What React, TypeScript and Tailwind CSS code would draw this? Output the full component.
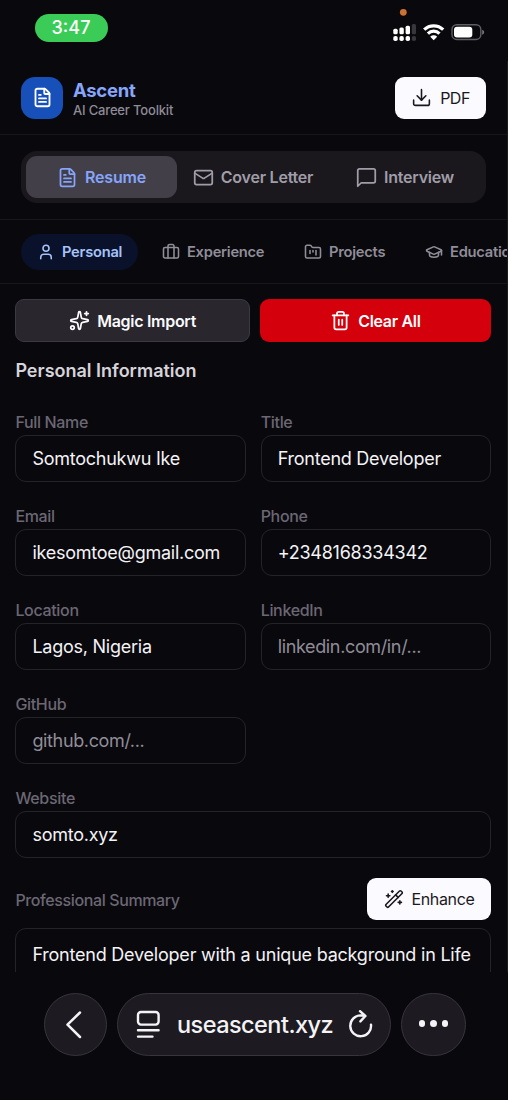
import {
  Briefcase,
  Download,
  FileText,
  FolderKanban,
  GraduationCap,
  Mail,
  Sparkles,
  Trash2,
  User,
  WandSparkles,
} from 'lucide-react';

function ChatIcon({ size = 24, className }: { size?: number; strokeWidth?: number; className?: string }) {
  return (
    <svg width={size} height={size} viewBox="0 0 24 24" fill="none" stroke="currentColor" strokeWidth="2" strokeLinecap="round" strokeLinejoin="round" className={className}>
      <path d="M22 16a2 2 0 0 1-2 2H6l-4 4V4a2 2 0 0 1 2-2h16a2 2 0 0 1 2 2z" />
    </svg>
  );
}

const mainTabs = [
  { label: 'Resume', icon: FileText, active: true, className: 'w-[151px]' },
  { label: 'Cover Letter', icon: Mail, active: false, className: 'w-[152px]' },
  { label: 'Interview', icon: ChatIcon, active: false, className: 'w-[152px]' },
];

const sections = [
  { label: 'Personal', icon: User, active: true },
  { label: 'Experience', icon: Briefcase, active: false },
  { label: 'Projects', icon: FolderKanban, active: false },
  { label: 'Education', icon: GraduationCap, active: false },
];

const fields = [
  { label: 'Full Name', value: 'Somtochukwu Ike' },
  { label: 'Title', value: 'Frontend Developer' },
  { label: 'Email', value: 'ikesomtoe@gmail.com' },
  { label: 'Phone', value: '+2348168334342' },
  { label: 'Location', value: 'Lagos, Nigeria' },
  { label: 'LinkedIn', placeholder: 'linkedin.com/in/...' },
  { label: 'GitHub', placeholder: 'github.com/...' },
  { label: 'Website', value: 'somto.xyz', wide: true },
];

function Field({ label, value, placeholder, wide }: { label: string; value?: string; placeholder?: string; wide?: boolean }) {
  return (
    <div className={wide ? 'col-span-2' : ''}>
      <div className="h-[25px] text-[16px] leading-[24px] font-medium tracking-[-0.33px] text-[#6b6773]">{label}</div>
      <div className="h-[47px] rounded-[11px] border-[1.5px] border-[#242328] px-4 text-[18px] leading-[46px] tracking-[-0.25px] whitespace-nowrap">
        {value ? (
          <span className="text-[#f4f3f6]">{value}</span>
        ) : (
          <span className="tracking-[-0.36px] text-[#908d98]">{placeholder}</span>
        )}
      </div>
    </div>
  );
}

function StatusBar() {
  return (
    <div className="relative h-[61px] shrink-0">
      <div className="absolute left-[34.5px] top-[14px] h-[28px] w-[73px] rounded-full bg-[#3bcc58] text-center text-[18px] leading-[28px] font-medium text-white">
        3:47
      </div>
      <svg className="absolute left-[388px] top-0" width="104" height="48" viewBox="0 0 104 48">
        <circle cx="15.3" cy="12.3" r="3.4" fill="#cd7331" />
        {/* Dual SIM signal */}
        <g fill="#fff">
          <rect x="5.3" y="28.8" width="4.4" height="5.4" rx="1.5" />
          <rect x="11.4" y="27.4" width="4.4" height="6.8" rx="1.5" />
          <rect x="17.6" y="25.8" width="4.4" height="8.4" rx="1.5" />
          <rect x="5.3" y="36" width="4.4" height="5" rx="1.8" />
          <rect x="11.4" y="36" width="4.4" height="5" rx="1.8" />
          <rect x="17.6" y="36" width="4.4" height="5" rx="1.8" />
        </g>
        <g fill="#38373b">
          <rect x="23.8" y="24" width="4.2" height="10.2" rx="1.5" />
          <rect x="23.8" y="36" width="4.2" height="5" rx="1.8" />
        </g>
        {/* Wifi */}
        <g fill="none" stroke="#fff" strokeWidth="3.2">
          <path d="M36.2 29.7 A13.5 13.5 0 0 1 55.2 29.7" />
          <path d="M39.9 33.6 A8.2 8.2 0 0 1 51.5 33.6" />
        </g>
        <path d="M45.7 40.3 L42.2 36.8 A5 5 0 0 1 49.2 36.8 Z" fill="#fff" />
        {/* Battery */}
        <rect x="64" y="24.7" width="28.8" height="14.8" rx="4.8" fill="none" stroke="#5f5e63" strokeWidth="1.4" />
        <rect x="66" y="26.7" width="18.3" height="10.8" rx="3" fill="#fff" />
        <path d="M94.2 29.8 C96.8 30.6 96.8 33.9 94.2 34.7 Z" fill="#77767b" />
      </svg>
    </div>
  );
}

function BrowserBar() {
  return (
    <div className="flex h-[128px] shrink-0 gap-[10px] pl-[44px] pt-[21px]">
      <div className="flex h-[63px] w-[63px] items-center justify-center rounded-full border border-[#37353c] bg-[#1d1b21]">
        <svg width="20" height="30" viewBox="0 0 20 30" fill="none" stroke="#f4f3f6" strokeWidth="2.5" strokeLinecap="round" strokeLinejoin="round">
          <path d="M14 2.5 L1.5 14.7 L14 27" />
        </svg>
      </div>
      <div className="flex h-[63px] w-[274px] items-center rounded-full border border-[#37353c] bg-[#1d1b21] pl-[18px]">
        <svg width="25" height="29" viewBox="0 0 25 29" fill="none" stroke="#f4f3f6" strokeWidth="2.4" strokeLinecap="round">
          <rect x="2" y="2" width="20.6" height="12.6" rx="3" />
          <path d="M2 20.2H22.6M2 26.6H16.5" />
        </svg>
        <span className="ml-[16px] w-[157px] text-[23.5px] leading-[32px] font-medium tracking-[-0.55px] whitespace-nowrap text-[#f4f3f6]">useascent.xyz</span>
        <svg className="ml-[14px]" width="26" height="30" viewBox="0 0 26 30" fill="none" stroke="#f4f3f6" strokeWidth="2.4" strokeLinecap="round" strokeLinejoin="round">
          <path d="M23 14.6 A10.4 10.4 0 1 1 12.6 5.4 L17.4 6 M12 1.2 L17.4 6 L12.4 11.4" />
        </svg>
      </div>
      <div className="flex h-[63px] w-[65px] items-center justify-center gap-[4.8px] rounded-full border border-[#37353c] bg-[#1d1b21] pb-[2px]">
        <span className="h-[6.5px] w-[6.5px] rounded-full bg-[#f4f3f6]" />
        <span className="h-[6.5px] w-[6.5px] rounded-full bg-[#f4f3f6]" />
        <span className="h-[6.5px] w-[6.5px] rounded-full bg-[#f4f3f6]" />
      </div>
    </div>
  );
}

export default function App() {
  return (
    <div className="flex h-[1100px] w-[508px] flex-col overflow-hidden bg-[#09080d] font-['Inter','Liberation_Sans',sans-serif]">
      <StatusBar />

      <div className="h-[911px] shrink-0 overflow-hidden border-r border-[#1b1b1e]">
        {/* Header */}
        <div className="flex h-[74px] items-start justify-between border-b-[1.5px] border-[#17161a] pl-[21px] pr-[21px] pt-[15.5px]">
          <div className="flex">
            <div className="flex h-[42px] w-[42px] items-center justify-center rounded-[14px] bg-[#1850ba] text-white">
              <FileText size={21} strokeWidth={2.1} />
            </div>
            <div className="ml-[10px]">
              <div className="text-[18.5px] leading-[26px] font-bold tracking-[-0.3px] text-[#86a5fb]">Ascent</div>
              <div className="text-[13px] leading-[15px] font-medium tracking-[-0.17px] text-[#8e8b96]">AI Career Toolkit</div>
            </div>
          </div>
          <button className="flex h-[42px] w-[91px] items-center justify-center gap-[8px] rounded-[9px] bg-[#fbfafe] text-[16px] tracking-[-0.5px] text-[#1a181d]">
            <Download size={21} strokeWidth={1.8} />
            PDF
          </button>
        </div>

        {/* Tool tabs */}
        <div className="h-[85px] border-b-[1.5px] border-[#17161a] pl-[21px] pt-[16px]">
          <div className="flex h-[52px] w-[465px] items-center rounded-[16px] bg-[#1a181d] px-[5px]">
            {mainTabs.map(({ label, icon: Icon, active, className }) => (
              <div
                key={label}
                className={`flex h-[42px] items-center justify-center gap-[7px] rounded-[11px] text-[16px] font-semibold tracking-[-0.22px] whitespace-nowrap ${className} ${active ? 'bg-[#423f49] text-[#86a5fb]' : 'text-[#a09da9]'}`}
              >
                <Icon size={21} strokeWidth={2} className="shrink-0" />
                {label}
              </div>
            ))}
          </div>
        </div>

        {/* Resume sections */}
        <div className="flex h-[64px] gap-[7.8px] overflow-hidden border-b-[1.5px] border-[#17161a] pl-[21px] pt-[14px]">
          {sections.map(({ label, icon: Icon, active }) => (
            <div
              key={label}
              className={`flex h-[36px] shrink-0 items-center gap-[7px] rounded-full px-[16px] text-[14.7px] font-semibold tracking-[-0.25px] ${active ? 'bg-[#09122a] text-[#a6c3fa]' : 'text-[#908d98]'}`}
            >
              <Icon size={18} strokeWidth={2.1} />
              {label}
            </div>
          ))}
        </div>

        {/* Form */}
        <div className="pl-[15.4px] pr-[16px] pt-[15.4px]">
          <div className="flex gap-[10px]">
            <button className="flex h-[42.5px] w-[234.5px] items-center justify-center gap-[7px] rounded-[9px] border-[1.5px] border-[#3c3944] bg-[#29272d] text-[16px] font-semibold tracking-[-0.3px] text-[#fbfafe]">
              <Sparkles size={21} />
              Magic Import
            </button>
            <button className="flex h-[42.5px] w-[231px] items-center justify-center gap-[7px] rounded-[9px] bg-[#d4000c] text-[16px] font-semibold tracking-[-0.3px] text-white">
              <Trash2 size={21} />
              Clear All
            </button>
          </div>

          <h2 className="mt-[17.1px] h-[24px] text-[18px] leading-[24px] font-semibold text-[#d6d4da]">Personal Information</h2>

          <div className="mt-[27.2px] grid grid-cols-2 gap-x-[15px] gap-y-[21.85px]">
            {fields.map((field) => (
              <Field key={field.label} {...field} />
            ))}
          </div>

          <div className="mt-[20.6px] flex items-center justify-between">
            <span className="pt-[1px] text-[16px] font-medium tracking-[-0.38px] text-[#6b6773]">Professional Summary</span>
            <button className="flex h-[42px] w-[124px] items-center justify-center gap-[8px] rounded-[9px] bg-[#fbfafe] text-[16px] tracking-[-0.35px] text-[#1a181d]">
              <WandSparkles size={20} strokeWidth={1.9} />
              Enhance
            </button>
          </div>
          <div className="mt-[8px] h-[120px] rounded-[11px] border-[1.5px] border-[#242328] px-4 pt-[12px] text-[18px] leading-[27px] tracking-[-0.22px] whitespace-nowrap text-[#f4f3f6]">
            Frontend Developer with a unique background in Life
          </div>
        </div>
      </div>

      <BrowserBar />
    </div>
  );
}
